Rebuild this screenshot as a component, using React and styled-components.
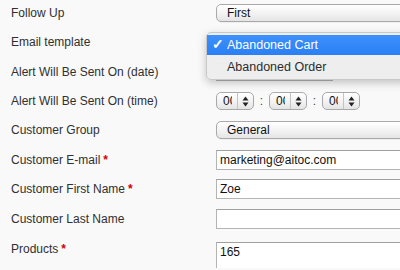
import React from 'react';
import styled, { createGlobalStyle } from 'styled-components';

const GlobalStyle = createGlobalStyle`
  html, body {
    margin: 0;
    padding: 0;
    background: #f9f9f9;
    overflow: hidden;
  }
  body {
    font-family: 'Liberation Sans', Arial, Helvetica, sans-serif;
    font-size: 12px;
    color: #303030;
  }
`;

const Form = styled.div`
  width: 400px;
  height: 270px;
  margin-top: -2px;
  overflow: hidden;
  position: relative;
`;

const Row = styled.div`
  display: grid;
  grid-template-columns: 216px 1fr;
  align-items: ${(p) => (p.top ? 'start' : 'center')};
  height: ${(p) => (p.tall ? '60px' : '29.45px')};
  position: relative;
`;

const Label = styled.div`
  padding-left: 11px;
  padding-top: ${(p) => (p.top ? '8px' : '0')};
  white-space: nowrap;
`;

const Req = styled.span`
  color: #d40000;
  font-weight: bold;
  margin-left: 3px;
`;

const Field = styled.div`
  display: flex;
  align-items: center;
  padding-top: ${(p) => (p.top ? '8px' : '0')};
  min-width: 0;
`;

const SelectBox = styled.div`
  box-sizing: border-box;
  width: 240px;
  flex-shrink: 0;
  height: 18px;
  border: 1px solid #a9a9a9;
  border-radius: 5px;
  background: linear-gradient(#ffffff, #f1f1f1 60%, #e4e4e4);
  box-shadow: 0 1px 0 rgba(0, 0, 0, 0.04);
  padding-left: 10px;
  line-height: 16px;
  color: #111;
`;

const TextInput = styled.div`
  box-sizing: border-box;
  width: ${(p) => p.w || '240px'};
  flex-shrink: 0;
  height: ${(p) => p.h || '20px'};
  border: 1px solid #b4b4b4;
  border-top-color: #a0a0a0;
  background: #fff;
  padding: 2px 3px;
  line-height: 15px;
  color: #111;
`;

const Spinner = styled.div`
  box-sizing: border-box;
  display: flex;
  width: 38px;
  height: 18px;
  border: 1px solid #a9a9a9;
  border-radius: 5px;
  background: linear-gradient(#ffffff, #f1f1f1 60%, #e4e4e4);
  overflow: hidden;
`;

const SpinValue = styled.div`
  width: 21px;
  padding-left: 6px;
  box-sizing: border-box;
  overflow: hidden;
  line-height: 16px;
  color: #111;
  white-space: nowrap;
  border-right: 1px solid #c4c4c4;
  span {
    display: inline-block;
    width: 9px;
    overflow: hidden;
  }
`;

const SpinArrows = styled.div`
  flex: 1;
  display: flex;
  align-items: center;
  justify-content: center;
`;

const Colon = styled.span`
  width: 15px;
  text-align: center;
  color: #444;
`;

const Popup = styled.div`
  position: absolute;
  left: 206px;
  top: 5px;
  width: 210px;
  height: 44px;
  padding-top: 2px;
  background: rgba(238, 238, 238, 0.98);
  border: 1px solid #c8c8c8;
  border-radius: 5px;
  box-shadow: 0 3px 8px rgba(0, 0, 0, 0.22);
  z-index: 2;
`;

const Option = styled.div`
  position: relative;
  height: 20px;
  line-height: 20px;
  padding-left: 20px;
  font-size: 12.5px;
  color: ${(p) => (p.active ? '#fff' : '#2c2c2c')};
  background: ${(p) => (p.active ? 'linear-gradient(#3d91fa, #2a7ff5)' : 'transparent')};
  margin-bottom: ${(p) => (p.active ? '2px' : '0')};
`;

const Check = styled.span`
  position: absolute;
  left: 5px;
  top: -1px;
  font-size: 14px;
  font-weight: bold;
`;

const Arrows = () => (
  <svg width="7" height="11" viewBox="0 0 7 11">
    <path d="M3.5 0.5 L6.5 4.5 L0.5 4.5 Z" fill="#222" />
    <path d="M3.5 10.5 L6.5 6.5 L0.5 6.5 Z" fill="#222" />
  </svg>
);

const TimeSpinner = () => (
  <Spinner>
    <SpinValue>
      <span>00</span>
    </SpinValue>
    <SpinArrows>
      <Arrows />
    </SpinArrows>
  </Spinner>
);

const App = () => {
  return (
    <>
      <GlobalStyle />
      <Form>
        <Row>
          <Label>Follow Up</Label>
          <Field>
            <SelectBox>First</SelectBox>
          </Field>
        </Row>
        <Row>
          <Label>Email template</Label>
          <Field>
            {/* the open menu covers this select */}
            <SelectBox />
          </Field>
          <Popup>
            <Option active>
              <Check>✓</Check>
              Abandoned Cart
            </Option>
            <Option>Abandoned Order</Option>
          </Popup>
        </Row>
        <Row>
          <Label>Alert Will Be Sent On (date)</Label>
          <Field>
            <TextInput w="117px" h="18px" />
          </Field>
        </Row>
        <Row>
          <Label>Alert Will Be Sent On (time)</Label>
          <Field>
            <TimeSpinner />
            <Colon>:</Colon>
            <TimeSpinner />
            <Colon>:</Colon>
            <TimeSpinner />
          </Field>
        </Row>
        <Row>
          <Label>Customer Group</Label>
          <Field>
            <SelectBox>General</SelectBox>
          </Field>
        </Row>
        <Row>
          <Label>
            Customer E-mail<Req>*</Req>
          </Label>
          <Field>
            <TextInput>marketing@aitoc.com</TextInput>
          </Field>
        </Row>
        <Row>
          <Label>
            Customer First Name<Req>*</Req>
          </Label>
          <Field>
            <TextInput>Zoe</TextInput>
          </Field>
        </Row>
        <Row>
          <Label>Customer Last Name</Label>
          <Field>
            <TextInput />
          </Field>
        </Row>
        <Row top tall>
          <Label top>
            Products<Req>*</Req>
          </Label>
          <Field top>
            <TextInput h="50px">165</TextInput>
          </Field>
        </Row>
      </Form>
    </>
  );
};

export default App;
